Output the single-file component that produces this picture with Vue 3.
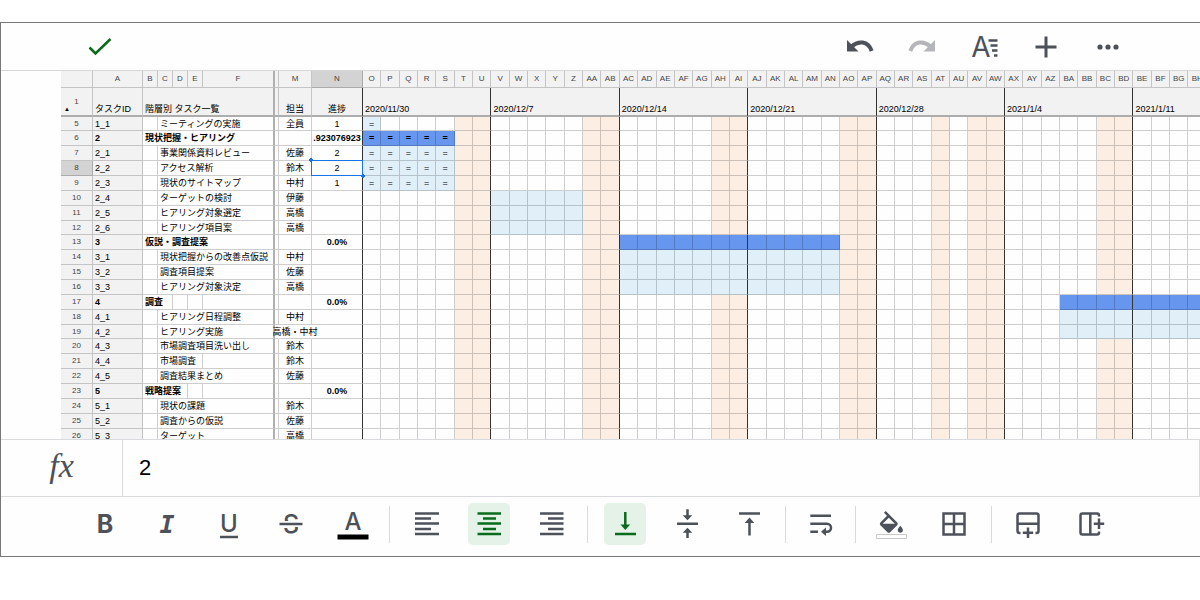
<template>
  <main class="app">
    <header class="topbar">
      <button class="icon-btn done" aria-label="完了">
        <svg viewBox="0 0 42 42"><path d="M10.5 21.5l6 6L31.5 13" /></svg>
      </button>
      <div class="group">
        <button class="icon-btn" aria-label="元に戻す">
          <svg viewBox="0 0 42 42">
            <path class="fill" d="M8 14v11.5h11.5z" />
            <path class="thick" d="M12.5 20.5C19 14.5 29 14.5 32.7 25" />
          </svg>
        </button>
        <button class="icon-btn disabled" aria-label="やり直し">
          <svg viewBox="0 0 42 42">
            <path class="fill" d="M34 14v11.5H22.5z" />
            <path class="thick" d="M29.5 20.5C23 14.5 13 14.5 9.3 25" />
          </svg>
        </button>
        <button class="icon-btn" aria-label="書式">
          <svg viewBox="0 0 42 42">
            <text class="light" x="18" y="31" font-size="28">A</text>
            <path class="halo" d="M27 14.5H35M29 19.5H35M31 24.5H35" />
            <path d="M25.5 14.5H34.5M27.5 19.5H34.5M29 24.5H34.5M31 29.5H34.5" />
          </svg>
        </button>
        <button class="icon-btn" aria-label="挿入">
          <svg viewBox="0 0 42 42"><path class="mid" d="M21 10.5v21M10.500 21h21" /></svg>
        </button>
        <button class="icon-btn" aria-label="その他">
          <svg viewBox="0 0 42 42">
            <circle cx="13" cy="21" r="2.6" /><circle cx="21" cy="21" r="2.6" /><circle cx="29" cy="21" r="2.6" />
          </svg>
        </button>
      </div>
    </header>

    <section class="sheet">
      <table>
        <colgroup>
          <col class="w-num" />
          <col class="w-id" />
          <col v-for="n in 4" :key="n" class="w-indent" />
          <col class="w-task" />
          <col class="w-gap" />
          <col class="w-person" />
          <col class="w-progress" />
          <col v-for="d in days" :key="d.name" />
        </colgroup>
        <thead>
          <tr class="letters">
            <th></th>
            <th>A</th>
            <th>B</th>
            <th>C</th>
            <th>D</th>
            <th>E</th>
            <th class="freeze">F</th>
            <th></th>
            <th>M</th>
            <th class="current">N</th>
            <th v-for="d in days" :key="d.name">{{ d.name }}</th>
          </tr>
          <tr class="titles">
            <th class="num"><span class="collapse">▲</span>1</th>
            <th class="left">タスクID</th>
            <th class="left freeze" colspan="5">階層別 タスク一覧</th>
            <th></th>
            <th>担当</th>
            <th class="week-end">進捗</th>
            <th
              v-for="(w, i) in weeks"
              :key="w"
              class="left"
              :class="{ 'week-end': i < 6 }"
              :colspan="i < 6 ? 7 : 4"
            >{{ w }}</th>
          </tr>
        </thead>
        <tbody>
          <tr v-for="r in rows" :key="r.no" :class="{ bold: r.head }">
            <th class="num" :class="{ current: r.no === 8 }">{{ r.no }}</th>
            <td class="id">{{ r.id }}</td>
            <td v-if="!r.head"></td>
            <td class="task" :class="{ freeze: !r.rest }" :colspan="r.span">{{ r.task }}</td>
            <td v-for="n in r.rest" :key="n" :class="{ freeze: n === r.rest }"></td>
            <td :class="{ open: r.no === 19 }"></td>
            <td :class="{ open: r.no === 19 }"><span class="mid-text">{{ r.who }}</span></td>
            <td class="week-end" :class="{ selected: r.no === 8 }"><span class="mid-text">{{ r.progress }}</span></td>
            <td v-for="(d, i) in days" :key="d.name" :class="cellClass(r, i)">{{ hasMark(r, i) ? '=' : '' }}</td>
          </tr>
        </tbody>
      </table>
    </section>

    <section class="formula">
      <label for="formula">fx</label>
      <input id="formula" v-model="formula" type="text" />
    </section>

    <footer class="toolbar">
      <div class="group">
        <button class="icon-btn" aria-label="太字">
          <svg viewBox="0 0 42 42"><text class="heavy" x="21" y="30" font-size="25">B</text></svg>
        </button>
        <button class="icon-btn" aria-label="斜体">
          <svg viewBox="0 0 42 42"><text class="slab" x="21" y="30" font-size="25">I</text></svg>
        </button>
        <button class="icon-btn" aria-label="下線">
          <svg viewBox="0 0 42 42">
            <text x="21" y="29" font-size="24">U</text>
            <path d="M12 34H30" />
          </svg>
        </button>
        <button class="icon-btn" aria-label="取り消し線">
          <svg viewBox="0 0 42 42">
            <text x="21" y="30" font-size="25">S</text>
            <path class="halo" d="M12 21H30" />
            <path d="M9.5 21H32.5" />
          </svg>
        </button>
        <button class="icon-btn" aria-label="文字の色">
          <svg viewBox="0 0 42 42">
            <text x="21" y="27" font-size="24">A</text>
            <path class="swatch" d="M5.5 31.500h31v5h-31z" />
          </svg>
        </button>
      </div>
      <span class="divider"></span>
      <div class="group">
        <button class="icon-btn" aria-label="左揃え">
          <svg viewBox="0 0 42 42"><path d="M9 10.5H33M9 15.5H25M9 20.5H33M9 26H25M9 31H33" /></svg>
        </button>
        <button class="icon-btn active" aria-label="中央揃え" aria-pressed="true">
          <svg viewBox="0 0 42 42"><path d="M9.5 10.5H33M15 15.5H28M9.5 20.5H33M15 26H28M9.5 31H33" /></svg>
        </button>
        <button class="icon-btn" aria-label="右揃え">
          <svg viewBox="0 0 42 42"><path d="M10 10.5H33.5M18 15.5H33.5M10 20.5H33.5M18 26H33.5M10 31H33.5" /></svg>
        </button>
      </div>
      <span class="divider"></span>
      <div class="group">
        <button class="icon-btn active" aria-label="下揃え" aria-pressed="true">
          <svg viewBox="0 0 42 42">
            <path d="M21.3 9V24M11 31H32" />
            <path class="fill" d="M16.5 21.5h9.6l-4.8 5.5z" />
          </svg>
        </button>
        <button class="icon-btn" aria-label="上下中央揃え">
          <svg viewBox="0 0 42 42">
            <path d="M21.5 6.3V14M11 20.7H32M21.5 28V35" />
            <path class="fill" d="M16.7 12.3h9.6l-4.8 5zM16.7 29.8h9.6l-4.8-5z" />
          </svg>
        </button>
        <button class="icon-btn" aria-label="上揃え">
          <svg viewBox="0 0 42 42">
            <path d="M11 10.5H32M21.5 18V32.5" />
            <path class="fill" d="M16.7 20h9.6l-4.8-5.5z" />
          </svg>
        </button>
      </div>
      <span class="divider"></span>
      <div class="group narrow">
        <button class="icon-btn" aria-label="折り返し">
          <svg viewBox="0 0 42 42">
            <path d="M10.3 12.7H31M10.3 20.7H27a4 4 0 0 1 0 8H24M10.3 28.7H18" />
            <path class="fill" d="M26 24.5v8.4l-5-4.2z" />
          </svg>
        </button>
      </div>
      <span class="divider"></span>
      <div class="group">
        <button class="icon-btn" aria-label="塗りつぶしの色">
          <svg viewBox="0 0 42 42">
            <path
              class="fill"
              transform="translate(4 8) scale(1.28)"
              d="M16.56 8.94L7.62 0 6.21 1.41l2.38 2.38-5.15 5.15c-.59.59-.59 1.54 0 2.12l5.5 5.5c.29.29.68.44 1.06.44s.77-.15 1.06-.44l5.5-5.5c.59-.58.59-1.53 0-2.12zM5.21 10L10 5.21 14.79 10H5.21zM19 11.5s-2 2.17-2 3.5c0 1.1.9 2 2 2s2-.9 2-2c0-1.33-2-3.5-2-3.5z"
            />
            <path class="empty-swatch" d="M4.5 31.5h30v4h-30z" />
          </svg>
        </button>
        <button class="icon-btn" aria-label="枠線">
          <svg viewBox="0 0 42 42"><path d="M9.5 10.5h21v21h-21zM20 10.5v21M9.5 21h21" /></svg>
        </button>
      </div>
      <span class="divider"></span>
      <div class="group">
        <button class="icon-btn" aria-label="行を挿入">
          <svg viewBox="0 0 42 42">
            <path d="M12.500 30h-1a2 2 0 0 1-2-2V12.5a2 2 0 0 1 2-2h17a2 2 0 0 1 2 2V28a2 2 0 0 1-2 2H27.5M9.5 20.7h21M20 24.5v10.500M14.8 29.8h10.400" />
          </svg>
        </button>
        <button class="icon-btn" aria-label="列を挿入">
          <svg viewBox="0 0 42 42">
            <path d="M29 13.5v-1a2 2 0 0 0-2-2H12.5a2 2 0 0 0-2 2v17a2 2 0 0 0 2 2H27a2 2 0 0 0 2-2V28.5M20.3 10.5v21M29 15.500v10.500M23.800 20.700h10.400" />
          </svg>
        </button>
      </div>
    </footer>
  </main>
</template>

<script setup>
import { ref } from 'vue'

const formula = ref('2')

const DAY_COUNT = 46
const HOLIDAYS = [31]

const columnName = (n) => {
  const letter = String.fromCharCode(65 + (n % 26))
  return n < 26 ? letter : String.fromCharCode(64 + Math.floor(n / 26)) + letter
}

// the calendar starts at column O
const days = Array.from({ length: DAY_COUNT }, (_, i) => ({ name: columnName(i + 14) }))

const weeks = ['2020/11/30', '2020/12/7', '2020/12/14', '2020/12/21', '2020/12/28', '2021/1/4', '2021/1/11']

// span: columns taken by the task name, rest: empty columns left before M
const task = (no, id, name, who = '', bar = null, extra = {}) => ({
  no, id, task: name, who, bar, span: 4, rest: 0, progress: '', ...extra
})
const head = (no, id, name, progress, bar = null, span = 5) => ({
  no, id, task: name, who: '', bar, span, rest: 5 - span, progress, head: true
})

const rows = [
  task(5, '1_1', 'ミーティングの実施', '全員', [0, 0], { progress: '1' }),
  head(6, '2', '現状把握・ヒアリング', '.923076923', [0, 4]),
  task(7, '2_1', '事業関係資料レビュー', '佐藤', [0, 4], { progress: '2' }),
  task(8, '2_2', 'アクセス解析', '鈴木', [0, 4], { progress: '2' }),
  task(9, '2_3', '現状のサイトマップ', '中村', [0, 4], { progress: '1' }),
  task(10, '2_4', 'ターゲットの検討', '伊藤', [7, 11]),
  task(11, '2_5', 'ヒアリング対象選定', '高橋', [7, 11]),
  task(12, '2_6', 'ヒアリング項目案', '高橋', [7, 11]),
  head(13, '3', '仮説・調査提案', '0.0%', [14, 25]),
  task(14, '3_1', '現状把握からの改善点仮説', '中村', [14, 25]),
  task(15, '3_2', '調査項目提案', '佐藤', [14, 25]),
  task(16, '3_3', 'ヒアリング対象決定', '高橋', [14, 25]),
  head(17, '4', '調査', '0.0%', [38, 45], 2),
  task(18, '4_1', 'ヒアリング日程調整', '中村', [38, 45]),
  task(19, '4_2', 'ヒアリング実施', '高橋・中村', [38, 45]),
  task(20, '4_3', '市場調査項目洗い出し', '鈴木'),
  task(21, '4_4', '市場調査', '鈴木', null, { span: 3, rest: 1 }),
  task(22, '4_5', '調査結果まとめ', '佐藤'),
  head(23, '5', '戦略提案', '0.0%', null, 3),
  task(24, '5_1', '現状の課題', '鈴木'),
  task(25, '5_2', '調査からの仮説', '佐藤'),
  task(26, '5_3', 'ターゲット', '高橋')
]

const inBar = (row, i) => row.bar !== null && i >= row.bar[0] && i <= row.bar[1]
const hasMark = (row, i) => row.no < 10 && inBar(row, i)

const cellClass = (row, i) => ({
  day: true,
  off: i % 7 > 4 || HOLIDAYS.includes(i),
  plan: inBar(row, i),
  total: inBar(row, i) && row.head,
  'week-end': i % 7 === 6
})
</script>

<style>
body {
  margin: 0;
  background: #fff;
}
</style>

<style scoped>
.app {
  margin-top: 22px;
  border: 1px solid #77787a;
  border-right: none;
  background: #fefefe;
  font-family: "Liberation Sans", "Noto Sans CJK JP", sans-serif;
  color: #000;
  overflow: hidden;
}

.topbar {
  display: flex;
  justify-content: space-between;
  padding: 3px 71px 2px 78px;
  border-bottom: 1px solid #d5d7d9;
}

.group {
  display: flex;
  gap: 20px;
}

.icon-btn {
  width: 42px;
  height: 42px;
  padding: 0;
  border: none;
  border-radius: 5px;
  background: none;
  color: #4d5159;
  cursor: pointer;
}

.icon-btn svg {
  display: block;
  width: 42px;
  height: 42px;
  fill: none;
  stroke: currentColor;
  stroke-width: 2.5;
}

.icon-btn.done,
.icon-btn.active {
  color: #0b6b1c;
}

.icon-btn.active {
  background: #e4f2e8;
}

.icon-btn.disabled {
  color: #b4b6ba;
}

.icon-btn .fill,
.icon-btn circle {
  fill: currentColor;
  stroke: none;
}

.icon-btn .mid {
  stroke-width: 3;
}

.icon-btn .thick {
  stroke-width: 4;
}

.icon-btn .halo {
  stroke: #fefefe;
  stroke-width: 6;
}

.icon-btn .swatch {
  fill: #000;
  stroke: none;
}

.icon-btn .empty-swatch {
  fill: #fff;
  stroke: #c8c8c8;
  stroke-width: 1;
}

.icon-btn text {
  fill: currentColor;
  stroke: none;
  font-family: Inter, sans-serif;
  font-weight: 500;
  text-anchor: middle;
}

.icon-btn .light {
  font-weight: 400;
}

.icon-btn .heavy {
  font-weight: 700;
}

.icon-btn .slab {
  font-family: "DejaVu Sans Mono", monospace;
  font-weight: 700;
  font-style: italic;
}

.sheet {
  height: 368px;
  padding-left: 60px;
  overflow: hidden;
}

table {
  width: calc(100% + 7px);
  table-layout: fixed;
  border-collapse: separate;
  border-spacing: 0;
  font-size: 9px;
}

.w-num { width: 32px; }
.w-id { width: 50px; }
.w-indent { width: 15px; }
.w-task { width: 72px; }
.w-gap { width: 4px; }
.w-person { width: 33px; }
.w-progress { width: 51px; }

th,
td {
  box-sizing: border-box;
  height: 15px;
  padding: 0;
  border: 0 solid rgba(0, 0, 0, 0.19);
  border-right-width: 1px;
  border-bottom-width: 1px;
  line-height: 12px;
  white-space: nowrap;
  font-weight: 400;
  text-align: center;
  vertical-align: middle;
}

tbody tr:nth-child(7n + 1) > * {
  height: 14px;
}

thead th,
.num,
.id {
  background: #f2f2f2;
}

.letters th {
  height: 17px;
  font-size: 8px;
  color: #444;
}

.titles th {
  height: 29px;
  border-bottom: 2px solid #adadad;
  vertical-align: bottom;
}

.num,
.titles .num {
  font-size: 8px;
  color: #444;
  vertical-align: middle;
}

.titles .num {
  position: relative;
}

.collapse {
  position: absolute;
  left: 3px;
  bottom: 0;
  font-size: 6px;
  color: #000;
}

.titles .left {
  padding-left: 2px;
  text-align: left;
}

.id,
.task {
  padding-left: 2px;
  text-align: left;
}

.bold td {
  font-weight: 700;
}

.letters .current,
.num.current {
  background: #d3d3d3;
}

.freeze {
  border-right: 2px solid #b0b0b0;
}

.off {
  background: #fceee3;
}

.day.plan {
  background: #e1eff9;
}

.day.total {
  background: #6796ee;
}

.week-end,
.titles .week-end {
  border-right: 1px solid #333;
}

.open {
  border-right-color: transparent;
}

.mid-text {
  display: flex;
  justify-content: center;
}

.selected {
  position: relative;
}

.selected::before {
  content: "";
  position: absolute;
  inset: -1px;
  border: 1px solid #1a73e8;
}

.selected::after {
  content: "";
  position: absolute;
  inset: -3px;
  background:
    radial-gradient(circle at 2px 2px, #1a73e8 2px, transparent 2px),
    radial-gradient(circle at calc(100% - 2px) calc(100% - 2px), #1a73e8 2px, transparent 2px);
}

.formula {
  display: flex;
  box-sizing: border-box;
  height: 58px;
  border: 1px solid #d8dadd;
  border-left: none;
}

.formula label {
  width: 121px;
  border-right: 1px solid #d8dadd;
  font: italic 34px/52px "Liberation Serif", serif;
  color: #4d5159;
  text-align: center;
}

.formula input {
  flex: 1;
  min-width: 0;
  padding: 0 16px;
  border: none;
  outline: none;
  background: none;
  font: 22px "Liberation Sans", sans-serif;
  color: #000;
}

.toolbar {
  display: flex;
  padding: 6px 0 11px 83px;
}

.toolbar .narrow .icon-btn {
  width: 38px;
}

.toolbar .narrow svg {
  margin-left: -2px;
}

.divider {
  width: 1px;
  height: 37px;
  margin: 3px 16px 0 15px;
  background: #d8dadd;
}
</style>
